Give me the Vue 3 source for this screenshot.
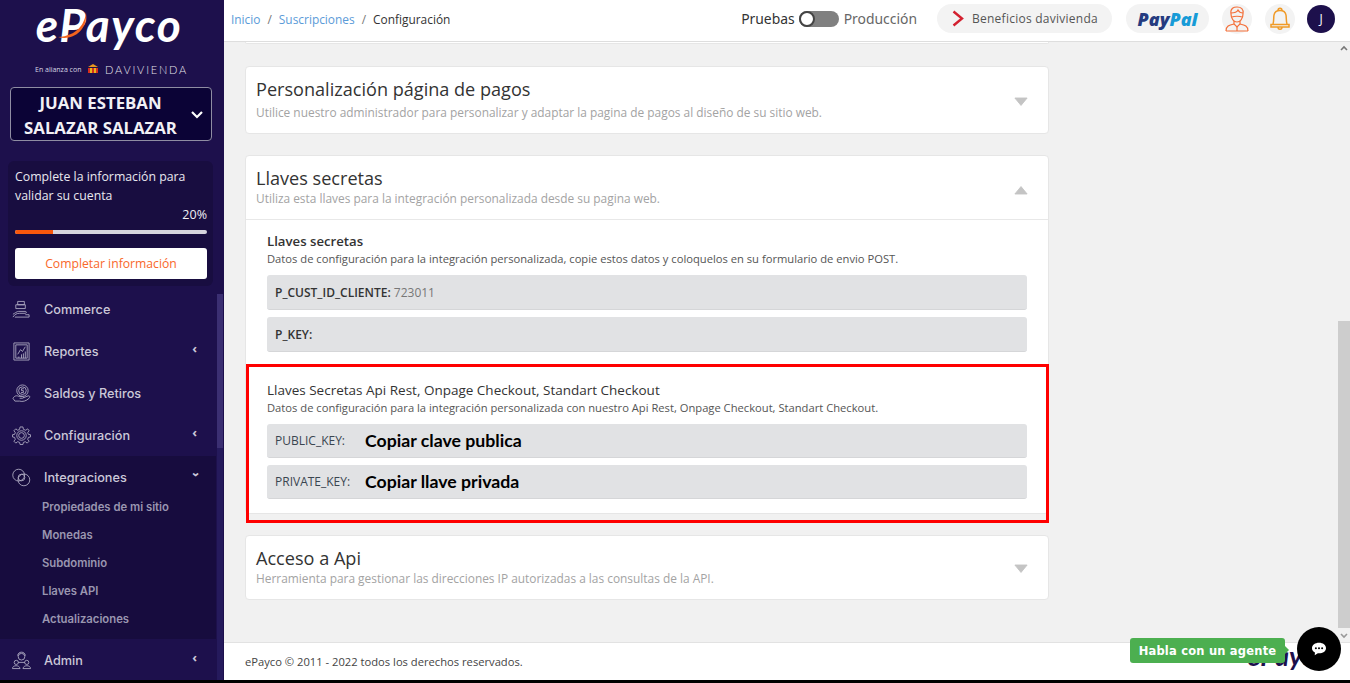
<script setup>
const menu = [
  { label: 'Commerce', icon: 'commerce' },
  { label: 'Reportes', icon: 'reports', arrow: true },
  { label: 'Saldos y Retiros', icon: 'balance' },
  { label: 'Configuración', icon: 'gear', arrow: true }
]
const submenu = ['Propiedades de mi sitio', 'Monedas', 'Subdominio', 'Llaves API', 'Actualizaciones']
</script>

<template>
  <div class="app">
    <aside class="sidebar">
      <div class="logo">
        <span class="logo-text">ePayco</span>
        <svg class="logo-swoosh" width="40" height="40" viewBox="0 0 40 40">
          <path d="M31 0 C30 12 22 24 3 25 C16 29 33 20 31 0Z" fill="#f4641e" />
        </svg>
      </div>
      <div class="alliance">
        <span class="alliance-with">En alianza con</span>
        <svg width="12" height="10" viewBox="0 0 12 10">
          <path d="M6 0 L11 3 H1Z" fill="#e8971f" />
          <path d="M1 4 H11 V9 H1Z" fill="#d6301c" />
          <path d="M3 4 H5 V9 H3Z M7 4 H9 V9 H7Z" fill="#e8b31f" />
        </svg>
        <span class="alliance-name">DAVIVIENDA</span>
      </div>

      <div class="account">
        <div class="account-name">JUAN ESTEBAN<br />SALAZAR SALAZAR</div>
        <svg width="14" height="9" viewBox="0 0 14 9">
          <path d="M2 2 L7 7 L12 2" fill="none" stroke="#fff" stroke-width="2.2" />
        </svg>
      </div>

      <div class="progress-card">
        <p class="progress-text">Complete la información para validar su cuenta</p>
        <div class="progress-value">20%</div>
        <div class="progress-track"><div class="progress-bar" :style="{ width: '20%' }"></div></div>
        <button class="complete-btn">Completar información</button>
      </div>

      <div class="menu-wrap">
        <nav class="menu">
          <div v-for="item in menu" :key="item.label" class="menu-item">
            <svg class="menu-icon" viewBox="0 0 20 20">
              <g v-if="item.icon === 'commerce'">
                <path d="M6 1.5 H13 V5 H6Z M4 5 H14 V9 H4Z" />
                <path d="M1 18 C3 15 5 14 8 14 H14 C15.500 14 15.500 12 14 12 H7 C5 12 3 14 1 15" />
                <path d="M3 18 H18 V15.500 H14" />
              </g>
              <g v-else-if="item.icon === 'reports'">
                <path d="M2 1 H18 V19 H2Z" />
                <path d="M4 3 H16 V17 H4Z" />
                <path d="M6 13 L9 8 L11 10 L14 5" />
                <path d="M10 17 V13 M12 17 V12 M14 17 V10 M6 16 H8" />
              </g>
              <g v-else-if="item.icon === 'balance'">
                <circle cx="11" cy="7" r="6" />
                <circle cx="11" cy="7" r="4" />
                <path d="M12.500 5 H10 V7 H12 V9 H9.500" />
                <path d="M1 15 C3 12 5 12 7 13 H11 C12.500 13 12.500 15 11 15 H8 M12 14.500 L17 12.500 C19 12 19 14 18 15 C15 18 11 19 8 18 L3 18 L1 15" />
              </g>
              <g v-else>
                <circle cx="10" cy="10" r="3" />
                <circle cx="10" cy="10" r="5" />
                <path d="M8.500 1 H11.500 L12 3.500 L14.500 4.500 L16.500 3 L18 5 L16.500 7 L17.300 8.800 L19.500 9.200 V11.500 L17.300 12 L16.500 14 L18 16 L16 18 L14 16.500 L12 17.300 L11.500 19.500 H8.500 L8 17.300 L6 16.500 L4 18 L2 16 L3.500 14 L2.700 12 L0.500 11.500 V9.200 L2.700 8.800 L3.500 7 L2 5 L4 3 L6 4.500 L8 3.500Z" />
              </g>
            </svg>
            <span class="menu-label">{{ item.label }}</span>
            <span v-if="item.arrow" class="menu-arrow">‹</span>
          </div>

          <div class="menu-group">
            <div class="menu-item">
              <svg class="menu-icon" viewBox="0 0 20 20">
                <circle cx="7" cy="7.500" r="6.200" />
                <circle cx="12.500" cy="12.500" r="6.200" />
                <circle cx="10" cy="10" r="3.500" />
              </svg>
              <span class="menu-label">Integraciones</span>
              <span class="menu-arrow open">‹</span>
            </div>
            <div v-for="sub in submenu" :key="sub" class="submenu-item">{{ sub }}</div>
          </div>

          <div class="menu-item">
            <svg class="menu-icon" viewBox="0 0 20 20">
              <circle cx="10" cy="6" r="3.500" />
              <path d="M6 5 C6 0 14 0 14 5" />
              <circle cx="4.500" cy="12" r="2.200" />
              <circle cx="15.500" cy="12" r="2.200" />
              <path d="M0.500 18.500 C0.500 14.500 8 14.500 8.500 18.500Z M11.500 18.500 C12 14.500 19.500 14.500 19.500 18.500Z" />
              <path d="M6.500 12 H13.500" />
            </svg>
            <span class="menu-label">Admin</span>
            <span class="menu-arrow">‹</span>
          </div>
        </nav>
        <div class="side-scroll"><div class="side-thumb"></div></div>
      </div>
    </aside>

    <div class="main">
      <header class="topbar">
        <div class="crumbs">
          <a>Inicio</a><span class="sep">/</span><a>Suscripciones</a><span class="sep">/</span><span class="current">Configuración</span>
        </div>
        <div class="top-right">
          <div class="mode">
            <span class="mode-test">Pruebas</span>
            <span class="toggle"><span class="knob"></span></span>
            <span class="mode-prod">Producción</span>
          </div>
          <div class="pill benefits">
            <svg width="12" height="17" viewBox="0 0 12 17">
              <path d="M1.500 1.500 L10 8.500 L1.500 15.500" fill="none" stroke="#d3202f" stroke-width="2.400" />
            </svg>
            <span>Beneficios davivienda</span>
          </div>
          <div class="pill paypal"><span class="pay">Pay</span><span class="pal">Pal</span></div>
          <div class="round agent">
            <svg width="24" height="26" viewBox="0 0 24 26" fill="none" stroke="#f4703a" stroke-width="1.200">
              <path d="M6 8 C5 2 9 1 12 1 C16 1 19 3 18 8 C18 13 15 16 12 16 C9 16 6 13 6 8Z" />
              <path d="M6 7 C9 7 12 6 13 4 C14 6 16 7 18 7" />
              <path d="M7 11 C9 10 15 10 17 11" />
              <path d="M9 15 V18 L12 21 L15 18 V15" />
              <path d="M1 25 C1 20 4 19 9 18 M23 25 C23 20 20 19 15 18 M1 25 H23 M12 21 V25" />
            </svg>
          </div>
          <div class="round bell">
            <svg width="22" height="24" viewBox="0 0 22 24" fill="none" stroke="#f09a27" stroke-width="1.500">
              <path d="M9 3.500 C9 0.500 13 0.500 13 3.500" />
              <path d="M4 17 C5 14 4.500 11 5 8 C6 2 16 2 17 8 C17.500 11 17 14 18 17" />
              <path d="M2 17.500 H20 V20 H2Z" />
              <path d="M9 20 C9 23 13 23 13 20" />
            </svg>
          </div>
          <div class="avatar">J</div>
        </div>
      </header>

      <div class="content">
        <div class="scroll-area">
          <div class="card stub"></div>

          <section class="card">
            <div class="card-head tall">
              <div class="head-text">
                <h2>Personalización página de pagos</h2>
                <p class="spaced">Utilice nuestro administrador para personalizar y adaptar la pagina de pagos al diseño de su sitio web.</p>
              </div>
              <svg class="caret" width="14" height="9" viewBox="0 0 16 10"><path d="M1 1 H15 L8 9.500Z" stroke="#c4c4c4" stroke-linejoin="round" /></svg>
            </div>
          </section>

          <section class="card open">
            <div class="card-head bordered">
              <div class="head-text">
                <h2>Llaves secretas</h2>
                <p>Utiliza esta llaves para la integración personalizada desde su pagina web.</p>
              </div>
              <svg class="caret up" width="14" height="9" viewBox="0 0 16 10"><path d="M1 9 H15 L8 0.500Z" stroke="#c4c4c4" stroke-linejoin="round" /></svg>
            </div>
            <div class="card-body">
              <h3>Llaves secretas</h3>
              <p class="hint">Datos de configuración para la integración personalizada, copie estos datos y coloquelos en su formulario de envio POST.</p>
              <div class="field high"><b>P_CUST_ID_CLIENTE:</b>&nbsp;<span class="val">723011</span></div>
              <div class="field high"><b>P_KEY:</b></div>

              <h3 class="second">Llaves Secretas Api Rest, Onpage Checkout, Standart Checkout</h3>
              <p class="hint">Datos de configuración para la integración personalizada con nuestro Api Rest, Onpage Checkout, Standart Checkout.</p>
              <div class="field"><span class="key">PUBLIC_KEY:</span><span class="copy">Copiar clave publica</span></div>
              <div class="field"><span class="key">PRIVATE_KEY:</span><span class="copy">Copiar llave privada</span></div>
            </div>
            <div class="red-box"></div>
          </section>

          <section class="card">
            <div class="card-head">
              <div class="head-text">
                <h2>Acceso a Api</h2>
                <p>Herramienta para gestionar las direcciones IP autorizadas a las consultas de la API.</p>
              </div>
              <svg class="caret" width="14" height="9" viewBox="0 0 16 10"><path d="M1 1 H15 L8 9.500Z" stroke="#c4c4c4" stroke-linejoin="round" /></svg>
            </div>
          </section>
        </div>

        <div class="page-scroll">
          <svg width="8" height="6" viewBox="0 0 8 6"><path d="M1 5 L4 2 L7 5" fill="none" stroke="#777" stroke-width="1.600" /></svg>
          <div class="page-thumb"></div>
          <svg width="8" height="6" viewBox="0 0 8 6"><path d="M1 1 L4 4 L7 1" fill="none" stroke="#999" stroke-width="1.600" /></svg>
        </div>
      </div>

      <footer class="footer">
        <span>ePayco © 2011 - 2022 todos los derechos reservados.</span>
        <span class="footer-logo">ePayco</span>
      </footer>
    </div>

    <div class="agent-tag">Habla con un agente</div>
    <div class="agent-btn">
      <svg width="16" height="14" viewBox="0 0 20 18">
        <path d="M10 1 C15 1 19 3.800 19 8 C19 12 15 14.500 10 14.500 L8.500 14.500 L4.500 17 L4.800 13.500 C2.500 12.500 1 10.500 1 8 C1 3.800 5 1 10 1Z" fill="#fff" />
        <circle cx="6" cy="8" r="1.300" fill="#000" />
        <circle cx="10" cy="8" r="1.300" fill="#000" />
        <circle cx="14" cy="8" r="1.300" fill="#000" />
      </svg>
    </div>
  </div>
</template>

<style scoped>
.app {
  position: relative;
  display: flex;
  width: 1350px;
  height: 683px;
  padding-bottom: 3px;
  box-sizing: border-box;
  background: #000;
  overflow: hidden;
  font-family: "Open Sans", sans-serif;
}

/* sidebar */
.sidebar {
  flex: 0 0 224px;
  display: flex;
  flex-direction: column;
  background: #1d104c;
  color: #fff;
}
.logo {
  position: relative;
  height: 62px;
  display: flex;
  justify-content: center;
  align-items: flex-start;
}
.logo-text {
  font-family: "Lato", sans-serif;
  font-style: italic;
  font-weight: 700;
  font-size: 46px;
  line-height: 50px;
  padding-right: 6px;
  letter-spacing: 1.500px;
}
.logo-swoosh {
  position: absolute;
  left: 55px;
  top: 12px;
}
.alliance {
  height: 14px;
  display: flex;
  align-items: center;
  padding-left: 35px;
  gap: 4px;
}
.alliance-with {
  font-size: 7px;
  color: #d8d6e2;
  width: 48px;
  white-space: nowrap;
}
.alliance-name {
  font-family: "Lato", sans-serif;
  font-weight: 300;
  font-size: 11px;
  letter-spacing: 1.800px;
  margin-left: 2px;
  color: #e4e3ea;
}
.account {
  margin: 11px 12px 0 10px;
  height: 54px;
  box-sizing: border-box;
  display: flex;
  align-items: center;
  border: 1px solid #8f8da3;
  border-radius: 4px;
  background: #0b0336;
  padding-right: 7px;
}
.account-name {
  flex: 1;
  padding-top: 2px;
  text-align: center;
  font-family: "Open Sans", sans-serif;
  font-weight: 700;
  font-size: 16.800px;
  line-height: 25px;
  color: #f1f0f5;
  white-space: nowrap;
}
.progress-card {
  margin: 20px 11px 0 8px;
  height: 125px;
  box-sizing: border-box;
  padding: 7px 6px 0 7px;
  background: #180d40;
  border-radius: 6px;
}
.progress-text {
  margin: 0;
  font-size: 12.300px;
  line-height: 18.500px;
  color: #e9e8ef;
}
.progress-value {
  text-align: right;
  font-size: 12.500px;
  line-height: 19px;
  color: #f0eff4;
}
.progress-track {
  margin-top: 6px;
  height: 4px;
  border-radius: 2px;
  background: #d6d4de;
  overflow: hidden;
}
.progress-bar {
  height: 100%;
  background: #f9570c;
}
.complete-btn {
  display: block;
  width: 100%;
  height: 31px;
  margin-top: 14px;
  border: 0;
  border-radius: 3px;
  background: #fff;
  color: #f9682a;
  font-family: "Open Sans", sans-serif;
  font-size: 12.200px;
}
.menu-wrap {
  flex: 1;
  display: flex;
  margin-top: 2px;
  min-height: 0;
}
.menu {
  width: 216px;
}
.menu-item {
  height: 42px;
  display: flex;
  align-items: center;
  padding-left: 12px;
  color: #cbc8d8;
}
.menu-icon {
  width: 19px;
  height: 19px;
  fill: none;
  stroke: #b3afc6;
  stroke-width: 0.900;
  flex: none;
}
.menu-label {
  margin-left: 13px;
  font-family: "Inter", sans-serif;
  font-weight: 500;
  font-size: 12.700px;
}
.menu-arrow {
  margin-left: auto;
  margin-right: 19px;
  margin-top: -5px;
  font-size: 13px;
  font-weight: 700;
  line-height: 1;
}
.menu-arrow.open {
  transform: rotate(-90deg);
}
.menu-group {
  height: 183px;
  background: #170c3e;
}
.submenu-item {
  height: 28px;
  padding-left: 42px;
  line-height: 28px;
  position: relative;
  top: -5px;
  font-family: "Inter", sans-serif;
  font-weight: 600;
  font-size: 11.300px;
  color: #9a96b0;
}
.side-scroll {
  width: 6px;
  margin-left: 1px;
  margin-top: 6px;
  background: #251a5c;
}
.side-thumb {
  height: 154px;
  background: #3b2f72;
}

/* top bar */
.main {
  flex: 1;
  display: flex;
  flex-direction: column;
  min-width: 0;
  background: #f1f1f1;
}
.topbar {
  flex: 0 0 42px;
  display: flex;
  align-items: center;
  justify-content: space-between;
  padding: 0 15px 4px 7px;
  box-sizing: border-box;
  background: #fff;
  border-bottom: 1px solid #dedede;
}
.crumbs {
  font-size: 11.900px;
  color: #5b9bd8;
}
.sep {
  margin: 0 7px;
  color: #777;
}
.current {
  color: #333;
}
.top-right {
  display: flex;
  align-items: center;
}
.mode {
  display: flex;
  align-items: center;
  font-family: "Noto Sans", sans-serif;
  font-size: 13.900px;
  margin-right: 20px;
}
.mode-test {
  color: #333;
}
.mode-prod {
  color: #666;
}
.toggle {
  width: 40px;
  height: 16px;
  margin: 0 5px 0 4px;
  background: #808080;
  border-radius: 8px;
  display: flex;
}
.knob {
  width: 16px;
  height: 16px;
  box-sizing: border-box;
  background: #fff;
  border: 2px solid #444;
  border-radius: 50%;
}
.pill {
  height: 29px;
  display: flex;
  align-items: center;
  background: #f3f3f3;
  border-radius: 15px;
}
.benefits {
  width: 175px;
  box-sizing: border-box;
  padding-left: 15px;
  gap: 8px;
  font-size: 12px;
  letter-spacing: 0.25px;
  color: #555;
  margin-right: 14px;
}
.paypal {
  width: 83px;
  justify-content: center;
  font-family: "Open Sans", sans-serif;
  font-style: italic;
  font-weight: 800;
  font-size: 18px;
  margin-right: 13px;
}
.pay {
  color: #253b80;
}
.pal {
  color: #179bd7;
}
.round {
  width: 30px;
  height: 30px;
  display: flex;
  align-items: center;
  justify-content: center;
  border-radius: 50%;
  background: #f3f3f3;
}
.round.agent {
  margin-right: 13px;
}
.round.bell {
  margin-right: 12px;
}
.avatar {
  width: 28px;
  height: 28px;
  display: flex;
  align-items: center;
  justify-content: center;
  border-radius: 50%;
  background: #1d104c;
  color: #fff;
  font-size: 12px;
}

/* content */
.content {
  flex: 1;
  display: flex;
  min-height: 0;
}
.scroll-area {
  flex: 1;
  padding-left: 21px;
  min-width: 0;
}
.card {
  position: relative;
  width: 804px;
  box-sizing: border-box;
  margin-bottom: 21px;
  background: #fff;
  border: 1px solid #e6e6e6;
  border-radius: 4px;
}
.stub {
  height: 2px;
  margin-bottom: 22px;
  border-top: 0;
  border-radius: 0 0 4px 4px;
}
.card-head {
  display: flex;
  justify-content: space-between;
  align-items: center;
  height: 63px;
  padding: 0 20px 0 10px;
}
.card-head.tall {
  height: 66px;
}
.card-head.bordered {
  border-bottom: 1px solid #e8e8e8;
}
.head-text {
  padding-bottom: 4px;
}
.card-head h2 {
  margin: 1px 0 -1px;
  font-weight: 400;
  font-size: 18.100px;
  line-height: 25px;
  color: #333;
}
.card-head p {
  margin: 0;
  font-size: 11.900px;
  line-height: 16px;
  color: #a3a3a3;
}
.card-head p.spaced {
  margin-top: 3px;
}
.caret {
  fill: #c4c4c4;
  margin-top: 2px;
}
.caret.up {
  margin-top: 5px;
}
.card-body {
  padding: 12px 21px 7px;
}
.card-body h3 {
  margin: 0;
  font-weight: 600;
  font-size: 13.200px;
  line-height: 18px;
  color: #333;
}
.card-body h3.second {
  margin-top: 29px;
  font-weight: 500;
  font-size: 13.500px;
}
.hint {
  margin: 1px 0 9px;
  font-size: 11.200px;
  line-height: 15px;
  color: #555;
}
.field {
  display: flex;
  align-items: center;
  height: 34px;
  box-sizing: border-box;
  margin-bottom: 7px;
  padding-left: 8px;
  background: #e1e2e4;
  border-radius: 3px;
  border-bottom: 1px solid #d5d6d8;
  font-size: 12px;
  color: #333;
  white-space: pre;
}
.field.high {
  height: 35px;
}
.field b {
  font-weight: 600;
}
.val {
  color: #777;
}
.key {
  width: 90px;
  color: #3a4550;
}
.copy {
  font-family: "Lato", sans-serif;
  font-weight: 700;
  font-size: 17.700px;
  color: #000;
}
.red-box {
  position: absolute;
  left: 0;
  top: 208px;
  width: 803px;
  height: 159px;
  box-sizing: border-box;
  border: 3px solid #f00;
  pointer-events: none;
}

/* page scrollbar */
.page-scroll {
  flex: 0 0 12px;
  display: flex;
  flex-direction: column;
  align-items: center;
  padding-top: 3px;
  background: #f1f1f1;
}
.page-thumb {
  width: 12px;
  height: 307px;
  margin-top: 270px;
  margin-bottom: 5px;
  background: #cdcdcd;
}

/* footer */
.footer {
  flex: 0 0 38px;
  display: flex;
  align-items: center;
  justify-content: space-between;
  box-sizing: border-box;
  padding: 0 22px 0 21px;
  background: #fff;
  border-top: 1px solid #e2e2e2;
  font-size: 11.200px;
  color: #444;
}
.footer-logo {
  font-family: "Lato", sans-serif;
  font-style: italic;
  font-weight: 700;
  font-size: 27px;
  line-height: 20px;
  margin-bottom: 12px;
  color: #1d104c;
}

/* chat widget */
.agent-tag {
  position: absolute;
  left: 1130px;
  top: 638px;
  width: 155px;
  height: 25px;
  display: flex;
  align-items: center;
  justify-content: center;
  background: #4caf50;
  border-radius: 3px;
  color: #fff;
  font-family: "DejaVu Sans", sans-serif;
  font-weight: 700;
  font-size: 11.500px;
  letter-spacing: 0.2px;
}
.agent-tag::after {
  content: "";
  position: absolute;
  left: 100%;
  top: 8px;
  border-left: 4px solid #4caf50;
  border-top: 4px solid transparent;
  border-bottom: 4px solid transparent;
}
.agent-btn {
  position: absolute;
  left: 1297px;
  top: 627px;
  width: 44px;
  height: 44px;
  display: flex;
  align-items: center;
  justify-content: center;
  background: #000;
  border-radius: 50%;
}
</style>
